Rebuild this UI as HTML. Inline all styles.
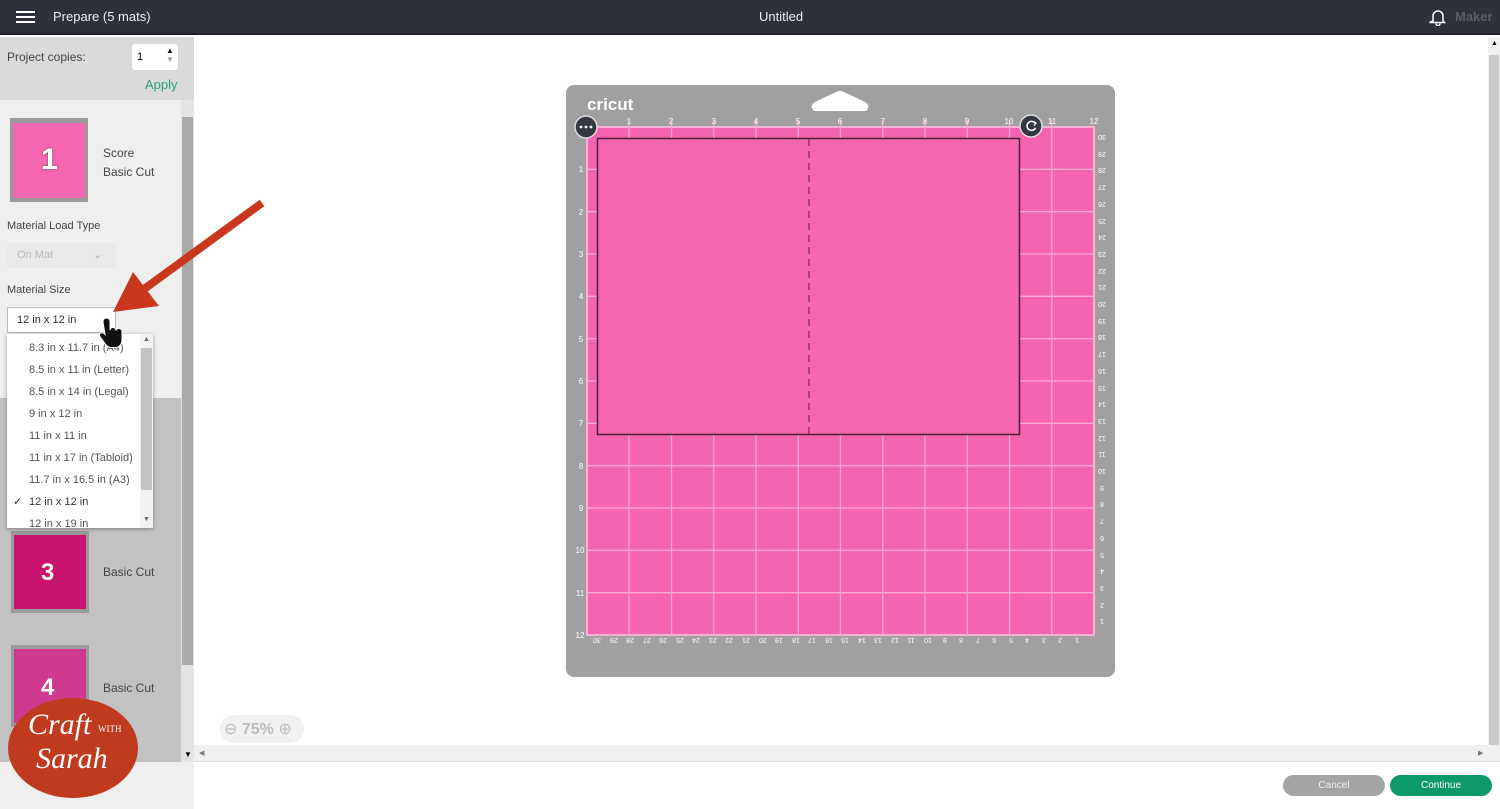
<!DOCTYPE html>
<html><head><meta charset="utf-8"><style>
*{margin:0;padding:0;box-sizing:border-box}
body{width:1500px;height:809px;position:relative;overflow:hidden;background:#fff;font-family:"Liberation Sans",Arial,sans-serif}
.a{position:absolute}
.t{font-size:12px;color:#333}
.dd div{height:22px;line-height:22px;padding-left:22px;font-size:11px;color:#555}
</style></head><body>
<div class="a" style="left:0;top:0;width:1500px;height:35px;background:#2e3139;border-bottom:2px solid #1e2026"></div>
<div class="a" style="left:16px;top:11px;width:19px;height:2px;background:#fff;box-shadow:0 5px 0 #fff,0 10px 0 #fff"></div>
<div class="a" style="left:53px;top:9px;color:#eee;font-size:13px">Prepare (5 mats)</div>
<div class="a" style="left:759px;top:9px;color:#eee;font-size:13px">Untitled</div>
<svg class="a" style="left:1429px;top:8px" width="18" height="18" viewBox="0 0 18 18"><path d="M4 13V8a5 5 0 0 1 10 0v5l1.5 1.5h-15z M7 15.5a2 2 0 0 0 4 0" fill="none" stroke="#fff" stroke-width="1.5"/></svg>
<div class="a" style="left:1455px;top:9px;color:#5a5d64;font-size:13px;font-weight:bold">Maker</div>

<div class="a" style="left:0;top:37px;width:194px;height:63px;background:#dadada"></div>
<div class="a t" style="left:7px;top:50px;color:#444">Project copies:</div>
<div class="a" style="left:132px;top:44px;width:46px;height:26px;background:#fff;border-radius:3px"></div>
<div class="a" style="left:137px;top:51px;font-size:11px">1</div>
<div class="a" style="left:166px;top:46px;font-size:8px;line-height:9px;color:#111">▲<br><span style="color:#999">▼</span></div>
<div class="a" style="left:145px;top:77px;color:#27a57a;font-size:13px">Apply</div>
<div class="a" style="left:0;top:100px;width:194px;height:662px;background:#efefef"></div>
<div class="a" style="left:0;top:398px;width:181px;height:364px;background:#c2c2c2"></div>
<div class="a" style="left:181px;top:100px;width:13px;height:662px;background:#e4e4e4"></div>
<div class="a" style="left:182px;top:117px;width:11px;height:548px;background:#a9a9a9"></div>
<div class="a" style="left:10px;top:118px;width:78px;height:84px;background:#9a9a9a"></div>
<div class="a" style="left:13px;top:123px;width:72px;height:75px;background:#f565b0"></div>
<div class="a" style="left:41px;top:143px;color:#fff;font-size:30px;font-weight:bold;text-shadow:0 0 2px #555">1</div>
<div class="a t" style="left:103px;top:144px;line-height:19px;color:#444">Score<br>Basic Cut</div>
<div class="a" style="left:7px;top:220px;font-size:11px;color:#444">Material Load Type</div>
<div class="a" style="left:7px;top:243px;width:109px;height:25px;background:#e9e9e9;color:#bbb;font-size:11px;line-height:25px;padding-left:10px">On Mat<span style="position:absolute;left:86px;color:#aaa">⌄</span></div>
<div class="a" style="left:7px;top:284px;font-size:11px;color:#444">Material Size</div>
<div class="a" style="left:7px;top:307px;width:109px;height:26px;background:#fff;border:1px solid #bbb;font-size:11px;line-height:24px;padding-left:9px;color:#333">12 in x 12 in</div>
<div class="a" style="left:11px;top:531px;width:78px;height:82px;background:#9a9a9a"></div>
<div class="a" style="left:14px;top:535px;width:72px;height:74px;background:#c8146e"></div>
<div class="a" style="left:41px;top:559px;color:#fff;font-size:24px;font-weight:bold">3</div>
<div class="a t" style="left:103px;top:565px;color:#444">Basic Cut</div>
<div class="a" style="left:11px;top:645px;width:78px;height:82px;background:#9a9a9a"></div>
<div class="a" style="left:14px;top:649px;width:72px;height:74px;background:#cf3a8e"></div>
<div class="a" style="left:41px;top:674px;color:#fff;font-size:24px;font-weight:bold">4</div>
<div class="a t" style="left:103px;top:681px;color:#444">Basic Cut</div>
<div class="a t" style="left:150px;top:450px;color:#444">t</div>
<div class="a dd" style="left:7px;top:334px;width:146px;height:194px;background:#fff;box-shadow:0 1px 4px rgba(0,0,0,.35);overflow:hidden;padding-top:3px">
<div>8.3 in x 11.7 in (A4)</div><div>8.5 in x 11 in (Letter)</div><div>8.5 in x 14 in (Legal)</div><div>9 in x 12 in</div><div>11 in x 11 in</div><div>11 in x 17 in (Tabloid)</div><div>11.7 in x 16.5 in (A3)</div><div style="position:relative;color:#333"><span style="position:absolute;left:6px">✓</span>12 in x 12 in</div><div>12 in x 19 in</div>
<span style="position:absolute;left:133px;top:0;width:13px;height:194px;background:#f2f2f2"></span>
<span style="position:absolute;left:134px;top:14px;width:11px;height:142px;background:#c1c1c1"></span>
<span style="position:absolute;left:136px;top:2px;font-size:7px;color:#666">▲</span>
<span style="position:absolute;left:136px;top:182px;font-size:7px;color:#666">▼</span>
</div>
<div class="a" style="left:0;top:762px;width:194px;height:47px;background:#efefef"></div>
<div class="a" style="left:184px;top:750px;font-size:8px">▼</div>
<div class="a" style="left:8px;top:698px;width:130px;height:100px;border-radius:50%;background:#c03a1f"></div>
<div class="a" style="left:28px;top:708px;color:#fff;font-family:'Liberation Serif',serif;font-style:italic;font-size:30px">Craft</div>
<div class="a" style="left:98px;top:724px;color:#fff;font-family:'Liberation Serif',serif;font-size:9px">WITH</div>
<div class="a" style="left:36px;top:742px;color:#fff;font-family:'Liberation Serif',serif;font-style:italic;font-size:30px">Sarah</div>

<div class="a" style="left:1488px;top:37px;width:12px;height:708px;background:#f0f0f0"></div>
<div class="a" style="left:1491px;top:40px;font-size:7px">▲</div>
<div class="a" style="left:1489px;top:55px;width:10px;height:690px;background:#c9c9c9"></div>
<div class="a" style="left:194px;top:745px;width:1306px;height:17px;background:#f0f0f0;border-bottom:1px solid #ddd"></div>
<div class="a" style="left:199px;top:749px;font-size:7px;color:#777">◀</div>
<div class="a" style="left:1478px;top:749px;font-size:7px;color:#777">▶</div>
<div class="a" style="left:220px;top:715px;width:84px;height:28px;border-radius:14px;background:#f1f1f1"></div>
<div class="a" style="left:224px;top:719px;font-size:16px;color:#bbb">⊖ <b>75%</b> ⊕</div>
<div class="a" style="left:1283px;top:775px;width:102px;height:21px;border-radius:11px;background:#a4a4a4;color:#eee;font-size:10px;text-align:center;line-height:21px">Cancel</div>
<div class="a" style="left:1390px;top:775px;width:102px;height:21px;border-radius:11px;background:#0e9968;color:#fff;font-size:10px;text-align:center;line-height:21px">Continue</div>

<svg class="a" style="left:0;top:0" width="1500" height="809" font-family="Liberation Sans" font-size="8" fill="#fff">
<rect x="566" y="85" width="549" height="592" rx="8" fill="#a0a0a0"/>
<path d="M815 102 L836 92 Q840 90 844 92 L865 102 Q871 106 866 111 L814 111 Q809 106 815 102Z" fill="#fff"/>
<text x="587" y="110" font-size="17" font-weight="bold">cricut</text>
<rect x="587" y="127" width="507" height="508" fill="#f564b0" stroke="#f7b0d6" stroke-width="2"/>
<g stroke="#f8a9d3" stroke-width="1.3">
<path d="M629 127V635M671.5 127V635M713.8 127V635M756 127V635M798.3 127V635M840.5 127V635M882.8 127V635M925 127V635M967.3 127V635M1009.5 127V635M1051.8 127V635"/>
<path d="M587 169.3H1094M587 211.7H1094M587 254H1094M587 296.3H1094M587 338.7H1094M587 381H1094M587 423.3H1094M587 465.7H1094M587 508H1094M587 550.3H1094M587 592.7H1094"/>
</g>
<g stroke="#f8a9d3" stroke-width="1.3"><path d="M629 120V127M671.5 120V127M713.8 120V127M756 120V127M798.3 120V127M840.5 120V127M882.8 120V127M925 120V127M967.3 120V127M1009.5 120V127M1051.8 120V127"/></g>
<rect x="597.5" y="138.5" width="422" height="296" fill="#f566b1" stroke="#4a2033" stroke-width="1.5"/>
<path d="M809 139V434" stroke="#8a2a58" stroke-width="1.3" stroke-dasharray="7,5"/>
<g text-anchor="middle">
<text x="629" y="124">1</text><text x="671" y="124">2</text><text x="714" y="124">3</text><text x="756" y="124">4</text><text x="798" y="124">5</text><text x="840" y="124">6</text><text x="883" y="124">7</text><text x="925" y="124">8</text><text x="967" y="124">9</text><text x="1009" y="124">10</text><text x="1052" y="124">11</text><text x="1094" y="124">12</text>
<text x="581" y="172">1</text><text x="581" y="215">2</text><text x="581" y="257">3</text><text x="581" y="299">4</text><text x="581" y="342">5</text><text x="581" y="384">6</text><text x="581" y="426">7</text><text x="581" y="469">8</text><text x="581" y="511">9</text><text x="580" y="553">10</text><text x="580" y="596">11</text><text x="580" y="638">12</text>
</g>
<g text-anchor="middle" font-size="7">
<text transform="translate(1102 135) rotate(180)">30</text><text transform="translate(1102 152) rotate(180)">29</text><text transform="translate(1102 168) rotate(180)">28</text><text transform="translate(1102 185) rotate(180)">27</text><text transform="translate(1102 202) rotate(180)">26</text><text transform="translate(1102 219) rotate(180)">25</text><text transform="translate(1102 235) rotate(180)">24</text><text transform="translate(1102 252) rotate(180)">23</text><text transform="translate(1102 269) rotate(180)">22</text><text transform="translate(1102 285) rotate(180)">21</text><text transform="translate(1102 302) rotate(180)">20</text><text transform="translate(1102 319) rotate(180)">19</text><text transform="translate(1102 335) rotate(180)">18</text><text transform="translate(1102 352) rotate(180)">17</text><text transform="translate(1102 369) rotate(180)">16</text><text transform="translate(1102 386) rotate(180)">15</text><text transform="translate(1102 402) rotate(180)">14</text><text transform="translate(1102 419) rotate(180)">13</text><text transform="translate(1102 436) rotate(180)">12</text><text transform="translate(1102 452) rotate(180)">11</text><text transform="translate(1102 469) rotate(180)">10</text><text transform="translate(1102 486) rotate(180)">9</text><text transform="translate(1102 502) rotate(180)">8</text><text transform="translate(1102 519) rotate(180)">7</text><text transform="translate(1102 536) rotate(180)">6</text><text transform="translate(1102 553) rotate(180)">5</text><text transform="translate(1102 569) rotate(180)">4</text><text transform="translate(1102 586) rotate(180)">3</text><text transform="translate(1102 603) rotate(180)">2</text><text transform="translate(1102 619) rotate(180)">1</text>
<text transform="translate(597 638) rotate(180)">30</text><text transform="translate(614 638) rotate(180)">29</text><text transform="translate(630 638) rotate(180)">28</text><text transform="translate(647 638) rotate(180)">27</text><text transform="translate(663 638) rotate(180)">26</text><text transform="translate(680 638) rotate(180)">25</text><text transform="translate(696 638) rotate(180)">24</text><text transform="translate(713 638) rotate(180)">23</text><text transform="translate(729 638) rotate(180)">22</text><text transform="translate(746 638) rotate(180)">21</text><text transform="translate(763 638) rotate(180)">20</text><text transform="translate(779 638) rotate(180)">19</text><text transform="translate(796 638) rotate(180)">18</text><text transform="translate(812 638) rotate(180)">17</text><text transform="translate(829 638) rotate(180)">16</text><text transform="translate(845 638) rotate(180)">15</text><text transform="translate(862 638) rotate(180)">14</text><text transform="translate(878 638) rotate(180)">13</text><text transform="translate(895 638) rotate(180)">12</text><text transform="translate(911 638) rotate(180)">11</text><text transform="translate(928 638) rotate(180)">10</text><text transform="translate(945 638) rotate(180)">9</text><text transform="translate(961 638) rotate(180)">8</text><text transform="translate(978 638) rotate(180)">7</text><text transform="translate(994 638) rotate(180)">6</text><text transform="translate(1011 638) rotate(180)">5</text><text transform="translate(1027 638) rotate(180)">4</text><text transform="translate(1044 638) rotate(180)">3</text><text transform="translate(1060 638) rotate(180)">2</text><text transform="translate(1077 638) rotate(180)">1</text>
</g>
<circle cx="586" cy="127" r="11" fill="#343841" stroke="#ddd" stroke-width="1.5"/>
<circle cx="581" cy="127" r="1.4"/><circle cx="586" cy="127" r="1.4"/><circle cx="591" cy="127" r="1.4"/>
<circle cx="1031" cy="126" r="11" fill="#343841" stroke="#ddd" stroke-width="1.5"/>
<path d="M1035 123 A4.5 4.5 0 1 0 1035.5 128" fill="none" stroke="#fff" stroke-width="1.5"/><path d="M1033 121.5L1036 123L1034 125.5" fill="none" stroke="#fff" stroke-width="1.3"/>
<path d="M262 203 L140 292" stroke="#c9381d" stroke-width="8"/>
<path d="M113 312 L133 272 L159 306Z" fill="#c9381d"/>
<path d="M103 322 q0-4 3.5-4 q3.5 0 3.5 4 v8 q1-3 3.5-2.5 q2.5.5 2.5 3 q1-2.5 3.5-2 q2.5.5 2.5 3 v8 q0 6-5 8 h-7 q-3-1-5-4 l-5-7 q-1.5-2.5 1-3.5 q2-1 4 1.5z" fill="#111" stroke="#fff" stroke-width="1"/>
</svg>
</body></html>
